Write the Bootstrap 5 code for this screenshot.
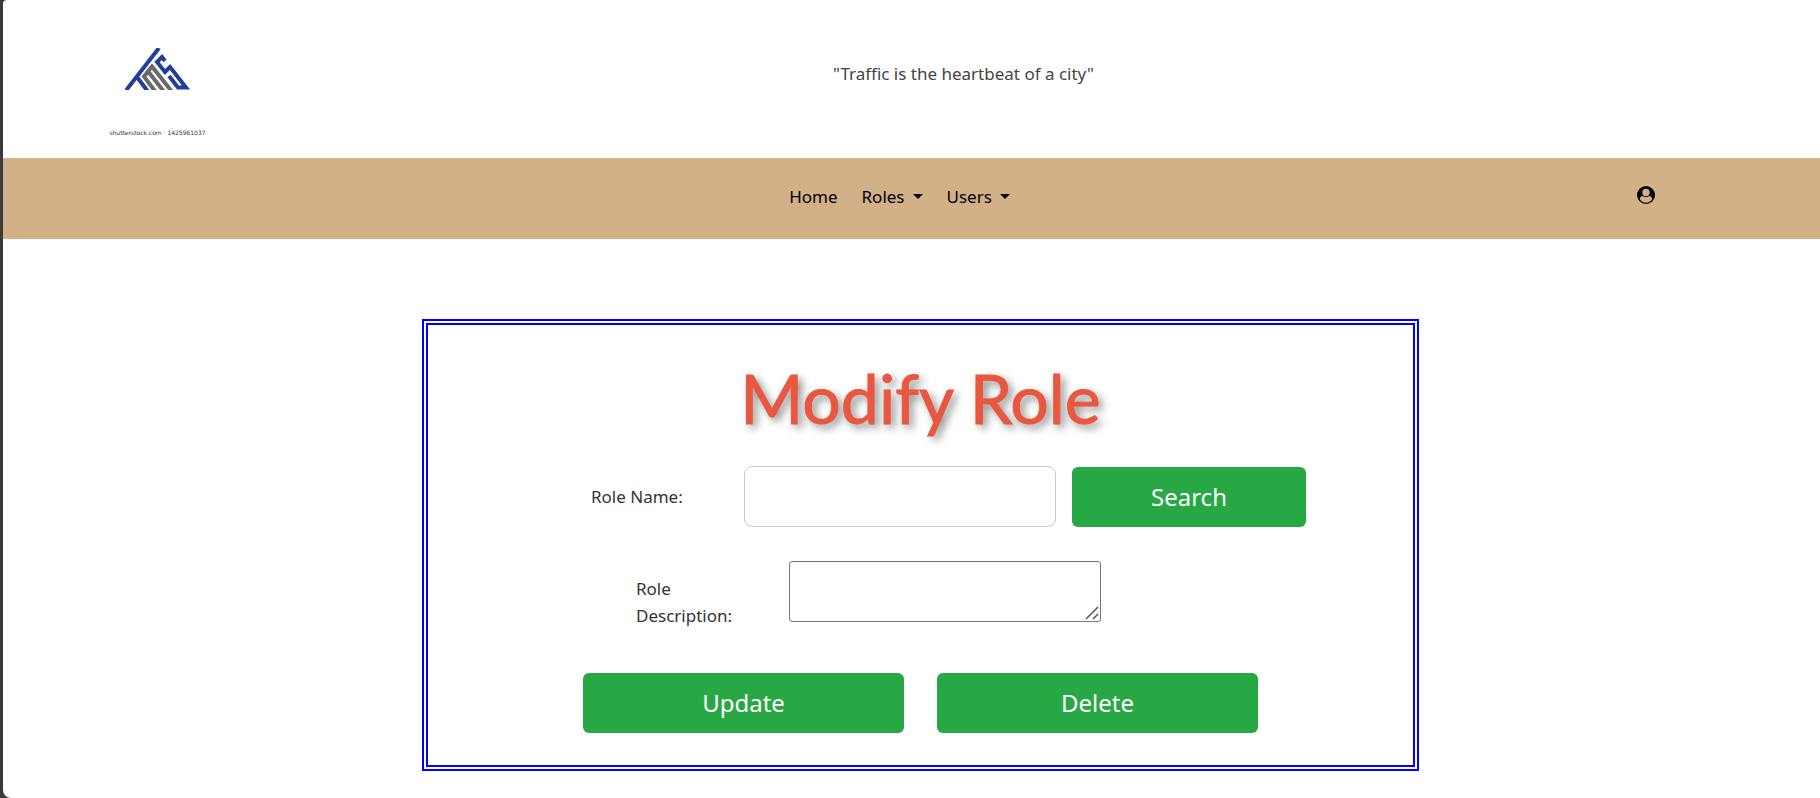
<!DOCTYPE html>
<html lang="en">
<head>
<meta charset="utf-8">
<meta name="viewport" content="width=device-width, initial-scale=1">
<title>Modify Role</title>
<link href="https://cdn.jsdelivr.net/npm/bootstrap@5.3.0/dist/css/bootstrap.min.css" rel="stylesheet">
<style>
  html { background: #3a3a3a; }
  body { margin-left: 3px; min-height: 100vh; background: #fff; border-radius: 4px 0 0 8px; color: #333; font: 18px/27px Tahoma, "Noto Sans", sans-serif; }
  .site-header { display: grid; grid-template-columns: 309px 1fr 205px; height: 158px; }
  .logo-mark { width: 66px; height: 42px; }
  .logo-credit { font: 6px/10px "DejaVu Sans", sans-serif; color: #333; margin-bottom: 20px; }
  .slogan { color: #444; font-size: 17px; padding-top: 60px; }
  .site-nav { display: grid; grid-template-columns: 1fr auto 1fr; background: #d3b188; height: 81px; padding: 0 24px 4px 0; }
  .nav-list { grid-column: 2; }
  .site-nav .nav-link { color: #000; padding: 8px 12px; font-size: 17px; }
  .site-nav .dropdown-toggle::after { margin-left: 8px; }
  .account-link { color: #000; margin-right: 141px; padding-bottom: 3px; }
  main { padding: 80px 0 27px 18px; }
  .role-card { max-width: 997px; border: 6px double #00f; padding: 34px 0 32px; }
  .role-title { font: 400 68px/77px "Comic Sans MS", Lato, sans-serif; color: #e9573f; -webkit-text-stroke: 1px #e9573f; text-shadow: 4px 4px 8px rgba(0,0,0,.5); margin-bottom: 30px; }
  .field-row { padding-left: 163px; margin-bottom: 34px; }
  .field-row.desc-row { padding-left: 208px; margin-bottom: 44px; }
  .field-label { width: 120px; margin-right: 33px; font-size: 17px; }
  .desc-row .field-label { padding-top: 14px; }
  .role-input { width: 312px; height: 61px; border: 1px solid #ccc; border-radius: 8px; padding: 8px 16px; }
  .role-text { width: 312px; height: 61px; border: 1px solid #767676; border-radius: 3px; padding: 2px 8px; background: #fff; }
  .role-text::-webkit-resizer { background: url("data:image/svg+xml,%3Csvg xmlns='http://www.w3.org/2000/svg' width='15' height='15'%3E%3Cpath d='M1 13L13 1M8 13L13 8' stroke='%23555' stroke-width='1.500'/%3E%3C/svg%3E") no-repeat right bottom; }
  .btn-green { --bs-btn-bg: #28a745; --bs-btn-color: #fff; --bs-btn-hover-bg: #218838; --bs-btn-hover-color: #fff; --bs-btn-border-radius: 6px; height: 60px; width: 321px; font-size: 24px; border: 0; }
  .btn-search { width: 234px; margin-left: 16px; }
  .action-row { gap: 33px; }
</style>
</head>
<body>
<header class="site-header">
  <div class="d-flex flex-column align-items-center pt-5">
    <svg class="logo-mark" viewBox="0 0 66 42" fill="none" role="img" aria-label="TMS logo">
      <g stroke="#213f99" stroke-width="4">
        <path d="M34 0 L-1 45"/>
        <path d="M12 29 L24 45"/>
        <path d="M40 13 L37 9 L32 14 L40 24 L45 19 L61 39.500 L53 39.500 L44 28"/>
      </g>
      <g stroke="#6a6a6a" stroke-width="4">
        <path d="M31.500 45 L19 28.500 L27 18.500 L48 45"/>
        <path d="M22 22 L40 45"/>
      </g>
    </svg>
    <span class="logo-credit mt-auto">shutterstock.com · 1425961037</span>
  </div>
  <div class="slogan text-center">"Traffic is the heartbeat of a city"</div>
</header>

<nav class="site-nav align-items-center">
  <ul class="nav nav-list">
    <li class="nav-item"><a class="nav-link" href="#">Home</a></li>
    <li class="nav-item dropdown"><a class="nav-link dropdown-toggle" href="#" role="button" data-bs-toggle="dropdown">Roles</a></li>
    <li class="nav-item dropdown"><a class="nav-link dropdown-toggle" href="#" role="button" data-bs-toggle="dropdown">Users</a></li>
  </ul>
  <a class="account-link d-flex ms-auto" href="#" aria-label="Account">
    <svg width="18" height="18" viewBox="0 0 18 18">
      <circle cx="9" cy="9" r="9"/>
      <circle cx="9" cy="6.500" r="3.700" fill="#d3b188"/>
      <path d="M2.800 13 C2.800 11 4.500 10 6 9.900 C8 11.500 10 11.500 12 9.900 C13.500 10 15.200 11 15.200 13 C14 15.500 11.500 16.700 9 16.700 S4 15.500 2.800 13Z" fill="#d3b188"/>
    </svg>
  </a>
</nav>

<main>
  <form class="role-card mx-auto">
    <h1 class="role-title text-center">Modify Role</h1>
    <div class="field-row d-flex align-items-center">
      <label class="field-label" for="roleName">Role Name:</label>
      <input class="role-input" type="text" id="roleName">
      <button class="btn btn-green btn-search" type="button">Search</button>
    </div>
    <div class="field-row desc-row d-flex align-items-start">
      <label class="field-label" for="roleDesc">Role Description:</label>
      <textarea class="role-text" id="roleDesc"></textarea>
    </div>
    <div class="action-row d-flex justify-content-center">
      <button class="btn btn-green" type="button">Update</button>
      <button class="btn btn-green" type="button">Delete</button>
    </div>
  </form>
</main>
<script src="https://cdn.jsdelivr.net/npm/bootstrap@5.3.0/dist/js/bootstrap.bundle.min.js"></script>
</body>
</html>
